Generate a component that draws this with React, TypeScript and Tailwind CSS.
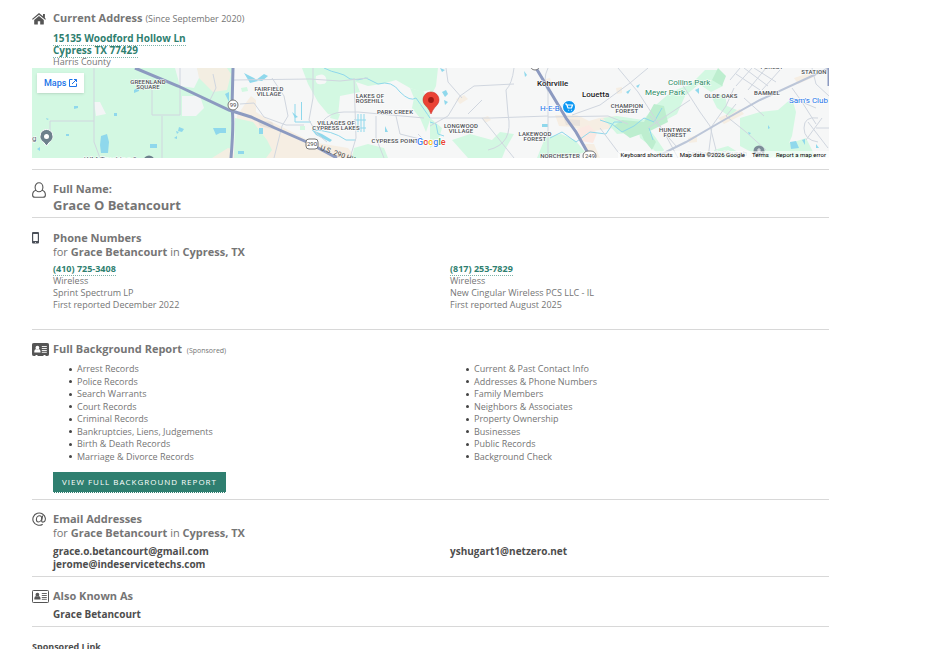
import type { ReactNode } from "react"

const mainRecords = [
  "Arrest Records",
  "Police Records",
  "Search Warrants",
  "Court Records",
  "Criminal Records",
  "Bankruptcies, Liens, Judgements",
  "Birth & Death Records",
  "Marriage & Divorce Records",
]

const contactRecords = [
  "Current & Past Contact Info",
  "Addresses & Phone Numbers",
  "Family Members",
  "Neighbors & Associates",
  "Property Ownership",
  "Businesses",
  "Public Records",
  "Background Check",
]

const phones = [
  { number: "(410) 725-3408", type: "Wireless", carrier: "Sprint Spectrum LP", reported: "First reported December 2022" },
  { number: "(817) 253-7829", type: "Wireless", carrier: "New Cingular Wireless PCS LLC - IL", reported: "First reported August 2025" },
]

const linkClass = "border-b border-dotted border-[#7fb3a8] font-bold text-[#2f7f70]"

function HomeIcon() {
  return (
    <svg className="mt-[2px] h-[12px] w-[14px]" viewBox="0 0 14 12" fill="#555">
      <path d="M7 2.9 2.2 6.9V11q0 .6.6.6h3V8.2h2.4v3.4h3q.6 0 .6-.6V6.900z" />
      <path d="M7 0 11 3.200V1h1.900v3.900L14 5.900l-.8.9L7 1.700.800 6.800 0 5.900z" />
    </svg>
  )
}

function PersonIcon() {
  return (
    <svg className="h-[16px] w-[14px]" viewBox="0 0 14 16" fill="none" stroke="#555" strokeWidth="1.100">
      <path d="M3.100 5.200C3.100 2.600 4.800.8 7 .8s3.900 1.800 3.900 4.400S9.200 9.800 7 9.800 3.100 7.800 3.100 5.200z" />
      <path d="M4 8.300C1.600 9 .6 10.800.6 13c0 1.500.9 2.300 2.400 2.300h8c1.500 0 2.400-.8 2.400-2.300 0-2.200-1-4-3.400-4.700" />
    </svg>
  )
}

function PhoneIcon() {
  return (
    <svg className="mt-px h-[12px] w-[7px]" viewBox="0 0 7 12">
      <path fill="#4a4f58" fillRule="evenodd" d="M1 0h5q1 0 1 1v9.500q0 1-1 1H1q-1 0-1-1V1q0-1 1-1zm.2 1.900v7.200h4.600V1.900z" />
      <path fill="#fff" d="M3 9.900h1v.8H3z" />
    </svg>
  )
}

function CardIcon({ filled = false }: { filled?: boolean }) {
  const fg = filled ? "#fff" : "#555"
  return (
    <svg className="mt-px h-[13px] w-[17px]" viewBox="0 0 17 13">
      <rect x=".5" y=".5" width="16" height="12" rx=".8" fill={filled ? "#555" : "none"} stroke="#555" />
      <path d="M3.500 12h2v1h-2zM11.500 12h2v1h-2z" fill={filled ? "#fff" : "#555"} />
      <circle cx="5.400" cy="4.700" r="1.900" fill={fg} />
      <path d="M2.300 9.500V8.200q0-1.900 1.900-2.200.5.500 1.200.5t1.200-.5q1.900.3 1.900 2.200v1.300z" fill={fg} />
      <path d="M9.800 3.500h5M9.800 5.500h5M9.800 7.500h5M9.800 9.300h5" stroke={fg} strokeWidth=".9" />
    </svg>
  )
}

function AtIcon() {
  return (
    <svg className="h-[14px] w-[14px]" viewBox="0 0 14 14" fill="none" stroke="#555" strokeWidth="1.100">
      <path d="M10.700 12.200A6.300 6.100 0 1 1 13.400 6.300c0 2.400-1.200 3.800-2.500 3.800-1 0-1.400-.7-1.200-1.700l.9-4.700" />
      <path d="M9.700 6.100c0-1.400-.8-2.300-2.100-2.300C5.800 3.800 4.400 5.500 4.400 7.500c0 1.500.8 2.500 2 2.500 1.900 0 3.300-2 3.300-3.900z" />
    </svg>
  )
}

function AreaMap() {
  return (
    <svg className="h-full w-full" viewBox="0 0 797 90" preserveAspectRatio="xMidYMid slice" fontFamily="Roboto, sans-serif">
      <rect width="797" height="90" fill="#f6f7f7" />

      {/* built-up ground */}
      <g fill="#f6eee3">
        <path d="M205 48l8-12 6-8 5 4v12l16 10 40 20 36 6 8 10H201z" />
        <path d="M523 47h22l12 6 10-3 18-2-2 12-28 4-14-5-14-1z" />
        <path d="M686 50l22-9 4 5-20 10zM762 10l18-6 4 4-18 8zM556 88l-6-12h12l6 14zM424 31l8-4 4 4-8 5zM450 50l6-2 3 4-6 3zM510 12l8-2 2 6-6 4zM584 20l6-1v6l-5 1zM656 70l9-3v7l-8 1z" />
      </g>
      <path d="M545 61l12-4 8 8-4 10-12-2z" fill="#fbe9e3" />

      {/* parks */}
      <g fill="#d3f8e2">
        <path d="M0 0h201v90H0z" />
        <path d="M203 50l18 4 14 18 5 10-6 8h-32z" />
        <path d="M209 20l6-1 1 4-6 1zM268 58h5v4h-5z" />
        <path d="M270 0h128v22l-8 2-12-4-14-8-14 4-14 2-12-4 4 10-20 4-2 20-10-2-10-12-10-18z" />
        <path d="M322 80l14-4 16 4 4 10h-36zM300 44l8 2-2 6-8-2z" />
        <path d="M378 20l14 4 6 14v14l-4 12-6-14-8-10 2-10z" />
        <path d="M398 0h8l-2 18-6 12v20l12 10-4 14-8 6z" />
        <path d="M420 72l18-6 22 6 8-8 14 2-8 14-4 10h-34z" />
        <path d="M513 70l16-4 14 6 10 12-18 6h-30z" />
        <path d="M571 50l14-2 26 4 14-16 14-12 20-8 14-14h14l4 16-12 6-12-8-14 12-8 18-22 12-18 6-20 2z" />
        <path d="M606 58l12 4 6 8 8 12-4 6-12-12-8-6z" />
        <path d="M679 28l14-2 2 12 10 4-8 6-12-8zM708 50l20-6 18-2 14-12 4 14-4 24-6 14-20 10-26-14z" />
        <path d="M682 82l14-4 10 6v6h-24zM746 78l14-4 6 16h-24zM762 74l12-4 10 20h-22z" />
      </g>
      <path d="M582 58l8-6 22 2 10-18 10 2 4 16-16 8-22 8zM606 58l10 4 8 12-4 8-8-10zM686 0l8 8-4 10-10-6z" fill="#bdeecf" />
      <path d="M284 8q8-4 10 2t-4 6q-8 2-6-8z" fill="#f6f7f7" />
      <path d="M143 0h22l3 8-6 12-14-2zM150 28h18l4 12-8 8h-14zM62 34h6l6 12-10 2z" fill="#f3f5f6" />
      <path d="M165 0h30l4 6-4 16-14 2-14-14zM180 90l16-10 5 1v9z" fill="#f3eee2" />
      <path d="M225 52l15 2 4 8-16-4zM532 51l16 1v6l-14-1z" fill="#e8e2dc" />

      {/* water */}
      <g fill="#8fd8ec">
        <path d="M69 68l6-2 2 8-1 11h-7l-1-8zM181 60h13v5h-6l-4 2zM118 76h7v4h-7zM193 26l4-2v10zM82 45h3v3h-3zM43 15l3 2v2l-4-1zM102 22l5-3v4l-5 2zM42 38h4v2l-4 1zM34 66h3v2h-3zM147 59l5 2-2 3-4-1zM142 70l3-2v3zM5 81l3-2v4zM144 63l3 1-2 2zM14 50l3 1-2 1z" />
        <path d="M212 5l10 5 4 3-8 2zM224 12l8-6 4 2-6 5zM227 60h4v6h-4zM206 83h6v3h-6zM269 34h1v18h-1zM260 44l6 5-3 1zM280 62l10 4 10 6-2 2-14-7zM353 58l3 6h-3z" />
        <path d="M410 24l4-2 2 4-3 3zM412 32l4 2-3 3zM408 0l5 2-3 2zM510 56h6v3h-6zM492 3l3 4-2 2zM604 18l4-2-2 4zM594 24l5-3-3 5zM663 22l4-2v6zM758 74l6-1 3 7-8 1zM770 72l3-1v6zM784 76l3 4h-3zM736 57l2 3-2 1zM716 64l3 1-2 2z" />
      </g>
      <path d="M292 0q8 4 14 5t12 6q8 2 16-1l12 6q14-4 22 8 10 10 16 6 10 14 14 20M326 46v18M329 46v18M332 46v18M322 52h12M322 60h12M280 62q20 0 34 10h10M398 54l6 2 2 10 6 2M263 36v18h16M518 70l12-6 14 10 14-10 16 2 8-12 8 0M568 52l12 4 10 8 12-6 10-8 10 4 8-14M617 60l4 12" fill="none" stroke="#8fd8ec" strokeWidth="1" />

      {/* streets */}
      <g fill="none" stroke="#d0d6df" strokeWidth="1">
        <path d="M62 0v74l6 16M18 73V53h44M120 14v33h28V0M130 48v42M181 6l3 14-6 12" />
        <path d="M202 12l76-1 30 2 28-3M208 36l14-1 10 14 22 8h18M240 10l12 18 4 20-6 10-8 32M281 0v30l-4 22 8 14 10 8M290 54q8-10 22-10h14l66 6M322 10l2 60-6 20M344 48v22l8 20M364 48l4 18 24 6M386 66l10 10M398 50h62l56-2M398 58l18-10 12-20 14-10 40-2M436 46l14-14M430 30l-14-16-2-14M450 50l32 40M482 0q-2 16-8 22l2 24q6 30-20 36" />
        <path d="M516 0q-6 12 0 24v66M540 47l28-10 30-22 18-15M516 49l60-1 20 8M568 60l18 24 6 6M586 0l20 24 26 40 14 26M618 48l26 30M650 16l18 28 10 14 8 32M702 20l-8 18-14 20-4 32M616 60l42-28M640 68l18-8" />
        <path d="M704 36l-10 12 20 16 20 18M760 20l10 14 14 22M780 0l4 16 13 12M712 30l20 18M786 50q-14-2-14 10t14 14M776 54l20 26M790 50l-16 22M784 60h13M760 30l24 10" />
        <path d="M704 6l24 16M712 0l24 18M722 0l22 14M704 18l16-18M716 22l18-22M730 22l18-20M698 12l10-12" />
      </g>
      <path d="M626 88l28-14 38-22 36-20 52-24 17-8" fill="none" stroke="#bcc6d8" strokeWidth="2" />

      {/* highways */}
      <g fill="none" stroke="#8c9ac0" strokeWidth="3">
        <path d="M103 0l43 18 51 24 22 7 24 11 34 15 28 15" />
        <path d="M201 0l-1 40q2 14-1 50" />
        <path d="M504 0l12 20 18 30 10 14 16 28" />
        <path d="M797 0v18" />
      </g>
      <g fill="#fff" stroke="#777" strokeWidth="1">
        <circle cx="201" cy="37" r="5" />
        <rect x="274" y="71" width="12" height="10" rx="3" />
        <rect x="551" y="83" width="13" height="10" rx="5" />
        <circle cx="503" cy="-3" r="5" />
      </g>
      <g fill="#444" fontSize="6" textAnchor="middle">
        <text x="201" y="39">99</text>
        <text x="280" y="78">290</text>
        <text x="558" y="90">249</text>
        <text transform="translate(308 89) rotate(20)" fontSize="7">U.S. 290 HWY</text>
      </g>

      {/* districts */}
      <g fill="#4a4d51" stroke="#fff" strokeWidth="1" paintOrder="stroke" fontSize="6" fontWeight="500" textAnchor="middle" className="tracking-wide">
        <text x="116" y="16">GREENLAND</text>
        <text x="116" y="21">SQUARE</text>
        <text x="237" y="23">FAIRFIELD</text>
        <text x="237" y="28">VILLAGE</text>
        <text x="338" y="30">LAKES OF</text>
        <text x="338" y="35">ROSEHILL</text>
        <text x="363" y="46">PARK CREEK</text>
        <text x="304" y="57">VILLAGES OF</text>
        <text x="304" y="62">CYPRESS LAKES</text>
        <text x="363" y="75">CYPRESS POINT</text>
        <text x="429" y="60">LONGWOOD</text>
        <text x="429" y="65">VILLAGE</text>
        <text x="503" y="68">LAKEWOOD</text>
        <text x="503" y="73">FOREST</text>
        <text x="528" y="90">NORCHESTER</text>
        <text x="595" y="40">CHAMPION</text>
        <text x="595" y="45">FOREST</text>
        <text x="643" y="64">HUNTWICK</text>
        <text x="643" y="69">FOREST</text>
        <text x="689" y="30">OLDE OAKS</text>
        <text x="735" y="27">BAMMEL</text>
        <text x="782" y="6">STATION</text>
        <text x="740" y="1">FOREST</text>
      </g>
      <g stroke="#fff" strokeWidth="1" paintOrder="stroke" fontSize="8">
        <g fill="#202124" fontWeight="500">
          <text x="505" y="18">Kohrville</text>
          <text x="550" y="29">Louetta</text>
        </g>
        <g fill="#2b8a64">
          <text x="636" y="17">Collins Park</text>
          <text x="613" y="27">Meyer Park</text>
        </g>
        <text x="508" y="43" fill="#1a73e8">H-E-B</text>
        <text x="757" y="35" fill="#1a73e8">Sam's Club</text>
        <text x="52" y="94" fill="#5f6b75">WM Trucking &amp;</text>
        <text x="0" y="73" fill="#5f6b75">g</text>
        <text x="655" y="88" fill="#b3bcc2">Fallbrook Church</text>
      </g>

      {/* pins */}
      <g>
        <path d="M14.500 61.500a6.500 6.500 0 0 1 4 11.500l-4 5-4-5a6.500 6.500 0 0 1 4-11.500z" fill="#6d808c" stroke="#fff" />
        <circle cx="14.500" cy="68.500" r="6" fill="#6d808c" />
        <circle cx="14.500" cy="68.500" r="2.500" fill="#fff" />
        <circle cx="117" cy="93" r="5.500" fill="#6d808c" />
        <circle cx="727" cy="83" r="5.500" fill="#7b8c97" />
        <path d="M727 80v5M725 82h4M724 88v-3l3-2 3 2v3z" stroke="#fff" strokeWidth=".8" fill="none" />
        <circle cx="537" cy="39" r="6.500" fill="#0b97f3" stroke="#fff" />
        <path d="M533 36h1.500l1.500 4h3.500l1-3h-5.500M536.500 42.300h.6M539.300 42.300h.6" stroke="#fff" strokeWidth="1.200" fill="none" />
        <path d="M399 24c4.500 0 8 3.500 8 8 0 3.200-2 5-4.300 7.600-1.700 2-2.600 3.900-3.700 6.400-1.100-2.500-2-4.400-3.700-6.400-2.300-2.600-4.300-4.400-4.300-7.600 0-4.500 3.500-8 8-8z" fill="#ea4335" stroke="#c5221f" strokeWidth=".5" />
        <circle cx="399" cy="32" r="2.900" fill="#a01a14" />
      </g>

      <text x="385" y="77" fontSize="9" fontWeight="500" stroke="#fff" strokeWidth="1.500" paintOrder="stroke">
        <tspan fill="#4285f4">G</tspan>
        <tspan fill="#ea4335">o</tspan>
        <tspan fill="#fbbc04">o</tspan>
        <tspan fill="#4285f4">g</tspan>
        <tspan fill="#34a853">l</tspan>
        <tspan fill="#ea4335">e</tspan>
      </text>
    </svg>
  )
}

interface SectionProps {
  icon: ReactNode
  children: ReactNode
  className?: string
}

function Section({ icon, children, className = "pt-3" }: SectionProps) {
  return (
    <section className={`flex border-b border-[#d8d8d8] ${className}`}>
      <div className="w-[21px] shrink-0">{icon}</div>
      <div className="min-w-0 flex-1">{children}</div>
    </section>
  )
}

function Heading({ children }: { children: ReactNode }) {
  return <h2 className="text-[11px] leading-[14px] font-bold text-[#757575]">{children}</h2>
}

function ForPerson() {
  return (
    <p className="text-[11px] leading-[14px] text-[#757575]">
      for <b>Grace Betancourt</b> in <b>Cypress, TX</b>
    </p>
  )
}

function RecordList({ items }: { items: string[] }) {
  return (
    <ul className="grid h-25 auto-rows-fr pl-4 leading-3">
      {items.map((item) => (
        <li key={item} className="flex items-center gap-[5px] before:size-[3px] before:rounded-full before:bg-[#444]">
          {item}
        </li>
      ))}
    </ul>
  )
}

export default function App() {
  return (
    <main className="h-screen overflow-hidden bg-white font-['Open_Sans','Noto_Sans',sans-serif] text-[9px] leading-3 text-[#757575]">
      <div className="ml-8 max-w-[797px]">
        <section className="border-b border-[#d8d8d8] pt-[11px] pb-[11px]">
          <div className="flex">
            <div className="w-[21px] shrink-0">
              <HomeIcon />
            </div>
            <div className="min-w-0 flex-1">
              <Heading>
                Current Address <span className="text-[9px] leading-none font-normal">(Since September 2020)</span>
              </Heading>
              <address className="mt-[7px] text-[10px] leading-3 not-italic">
                <a href="#address" className={linkClass}>15135 Woodford Hollow Ln</a>
                <br />
                <a href="#address" className={linkClass}>Cypress TX 77429</a>
                <p className="text-[9px] leading-3">Harris County</p>
              </address>
            </div>
          </div>
          <div className="relative h-[90px] overflow-hidden font-[Roboto,sans-serif]">
            <AreaMap />
            <a href="#map" className="absolute top-[5px] left-[5px] flex h-5 items-center gap-[3px] bg-white px-[7px] text-[9px] font-medium text-[#1a73e8] shadow-sm">
              Maps
              <svg className="h-2 w-2" viewBox="0 0 8 8" fill="none" stroke="#1a73e8">
                <path d="M3.500.5h-3v7h7v-3M5 .5h2.500V3M7.500.5 3 5" />
              </svg>
            </a>
            <div className="absolute right-0 bottom-0 flex gap-[7px] bg-white/60 px-[3px] text-[6px] leading-[7px] text-black">
              <button type="button">Keyboard shortcuts</button>
              <span>Map data ©2026 Google</span>
              <a href="#terms">Terms</a>
              <a href="#report">Report a map error</a>
            </div>
          </div>
        </section>

        <Section icon={<PersonIcon />} className="pt-3 pb-[3px]">
          <Heading>Full Name:</Heading>
          <p className="text-[13px] leading-[18px] font-bold">Grace O Betancourt</p>
        </Section>

        <Section icon={<PhoneIcon />} className="pt-[13px] pb-[18px]">
          <Heading>Phone Numbers</Heading>
          <ForPerson />
          <div className="mt-1 grid grid-cols-2 gap-x-[18px]">
            {phones.map((phone) => (
              <div key={phone.number}>
                <a href="#phone" className={linkClass}>{phone.number}</a>
                <p>{phone.type}</p>
                <p>{phone.carrier}</p>
                <p>{phone.reported}</p>
              </div>
            ))}
          </div>
        </Section>

        <Section icon={<CardIcon filled />} className="pt-3 pb-[6px]">
          <Heading>
            Full Background Report <span className="ml-[2px] text-[7px] leading-none font-normal">(Sponsored)</span>
          </Heading>
          <div className="mt-[7px] grid grid-cols-2 gap-x-[18px]">
            <RecordList items={mainRecords} />
            <RecordList items={contactRecords} />
          </div>
          <button type="button" className="mt-[9px] block h-[21px] border-b border-dotted border-white bg-[#2f7f70] px-[9px] text-[8px] font-medium tracking-[1px] text-white uppercase">
            View Full Background Report
          </button>
        </Section>

        <Section icon={<AtIcon />} className="pt-3 pb-[5px]">
          <Heading>Email Addresses</Heading>
          <ForPerson />
          <div className="mt-[5px] grid grid-cols-2 gap-x-[18px] text-[10px] leading-[13px] font-bold text-[#4d4d4d]">
            <div>
              <p>grace.o.betancourt@gmail.com</p>
              <p>jerome@indeservicetechs.com</p>
            </div>
            <p>yshugart1@netzero.net</p>
          </div>
        </Section>

        <Section icon={<CardIcon />} className="pt-3 pb-[5px]">
          <Heading>Also Known As</Heading>
          <p className="mt-[5px] text-[10px] leading-[13px] font-bold text-[#4d4d4d]">Grace Betancourt</p>
        </Section>

        <p className="mt-[13px] leading-[13px] font-bold text-[#4d4d4d]">Sponsored Link</p>
      </div>
    </main>
  )
}
